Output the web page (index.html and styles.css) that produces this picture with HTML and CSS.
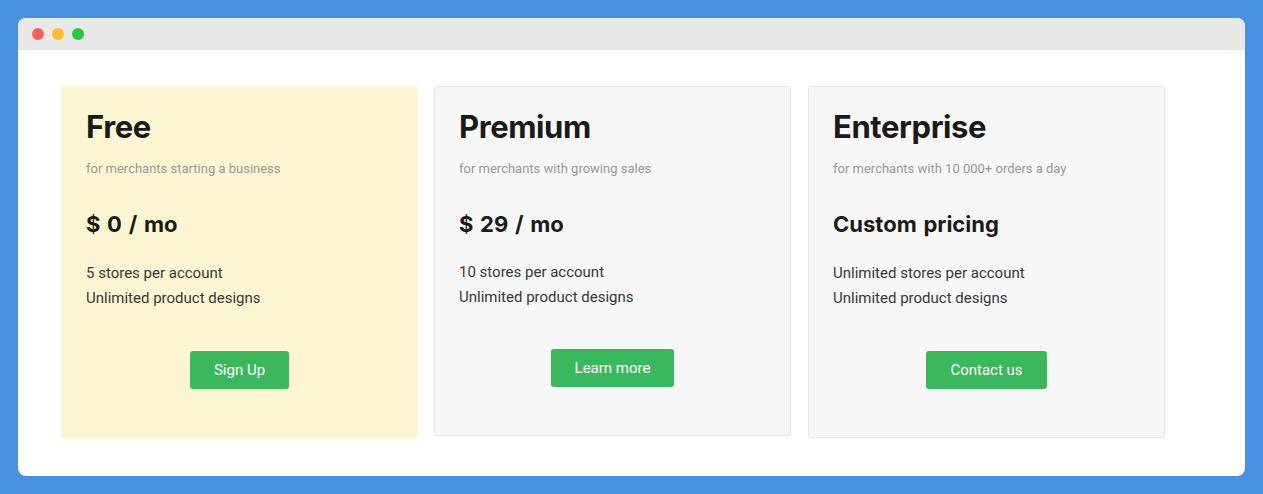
FILE: index.html
```html
<!DOCTYPE html>
<html lang="en">
<head>
<meta charset="utf-8">
<title>Pricing</title>
<link rel="stylesheet" href="styles.css">
</head>
<body>
<div class="window">
  <div class="titlebar">
    <span class="dot dot-red"></span>
    <span class="dot dot-yellow"></span>
    <span class="dot dot-green"></span>
  </div>
  <div class="content">
    <div class="plan plan-free">
      <h2 class="plan-title">Free</h2>
      <p class="plan-sub">for merchants starting a business</p>
      <p class="plan-price">$ 0 / mo</p>
      <ul class="features">
        <li>5 stores per account</li>
        <li>Unlimited product designs</li>
      </ul>
      <div class="actions"><a class="btn" href="#">Sign Up</a></div>
    </div>
    <div class="plan plan-premium">
      <h2 class="plan-title">Premium</h2>
      <p class="plan-sub">for merchants with growing sales</p>
      <p class="plan-price">$ 29 / mo</p>
      <ul class="features">
        <li>10 stores per account</li>
        <li>Unlimited product designs</li>
      </ul>
      <div class="actions"><a class="btn" href="#">Learn more</a></div>
    </div>
    <div class="plan plan-enterprise">
      <h2 class="plan-title">Enterprise</h2>
      <p class="plan-sub">for merchants with 10 000+ orders a day</p>
      <p class="plan-price">Custom pricing</p>
      <ul class="features">
        <li>Unlimited stores per account</li>
        <li>Unlimited product designs</li>
      </ul>
      <div class="actions"><a class="btn" href="#">Contact us</a></div>
    </div>
  </div>
</div>
</body>
</html>
```
FILE: styles.css
```css
* { box-sizing: border-box; }
html, body { margin: 0; padding: 0; }
body {
  background: #4a90e2;
  padding: 18px;
  font-family: Roboto, "Liberation Sans", sans-serif;
}
.window {
  width: 1227px;
  height: 458px;
  background: #fff;
  border-radius: 8px;
  overflow: hidden;
}
.titlebar {
  height: 32px;
  background: #e8e8e8;
  display: flex;
  align-items: center;
  gap: 8px;
  padding-left: 14px;
}
.dot {
  width: 12px;
  height: 12px;
  border-radius: 50%;
  display: block;
}
.dot-red { background: #fe5f57; }
.dot-yellow { background: #febc2e; }
.dot-green { background: #28c840; }
.content {
  display: flex;
  gap: 16px;
  padding: 36px 0 0 43px;
  align-items: flex-start;
}
.plan {
  width: 357px;
  height: 352px;
  padding: 20px 24px 0;
  border-radius: 3px;
  background: #f7f7f7;
  border: 1px solid #e6e6e6;
}
.plan-free {
  background: #fef6d2;
  border-color: #fef6d2;
}
.plan-premium { height: 350px; }
.plan-enterprise { margin-left: 1px; }
.plan-title {
  margin: 0;
  font-family: Inter, "Liberation Sans", sans-serif;
  font-weight: 700;
  font-size: 31px;
  line-height: 40px;
  letter-spacing: -0.4px;
  color: #1a1a1a;
}
.plan-sub {
  margin: 12px 0 0;
  font-size: 13px;
  line-height: 20px;
  color: #999;
}
.plan-price {
  margin: 30px 0 0;
  font-family: Inter, "Liberation Sans", sans-serif;
  font-weight: 700;
  font-size: 22px;
  line-height: 30px;
  word-spacing: 1.5px;
  color: #1a1a1a;
}
.features {
  list-style: none;
  margin: 22px 0 0;
  padding: 0;
  font-size: 15px;
  line-height: 25px;
  color: #383838;
}
.plan-premium .features { margin-top: 21px; line-height: 24.5px; }
.actions {
  display: flex;
  justify-content: center;
  margin-top: 40px;
}
.plan-premium .actions { margin-top: 40px; }
.btn {
  display: inline-block;
  height: 38px;
  line-height: 38px;
  padding: 0 24px;
  background: #3bb85e;
  color: #fff;
  border-radius: 3px;
  text-decoration: none;
  font-size: 15px;
}
```
